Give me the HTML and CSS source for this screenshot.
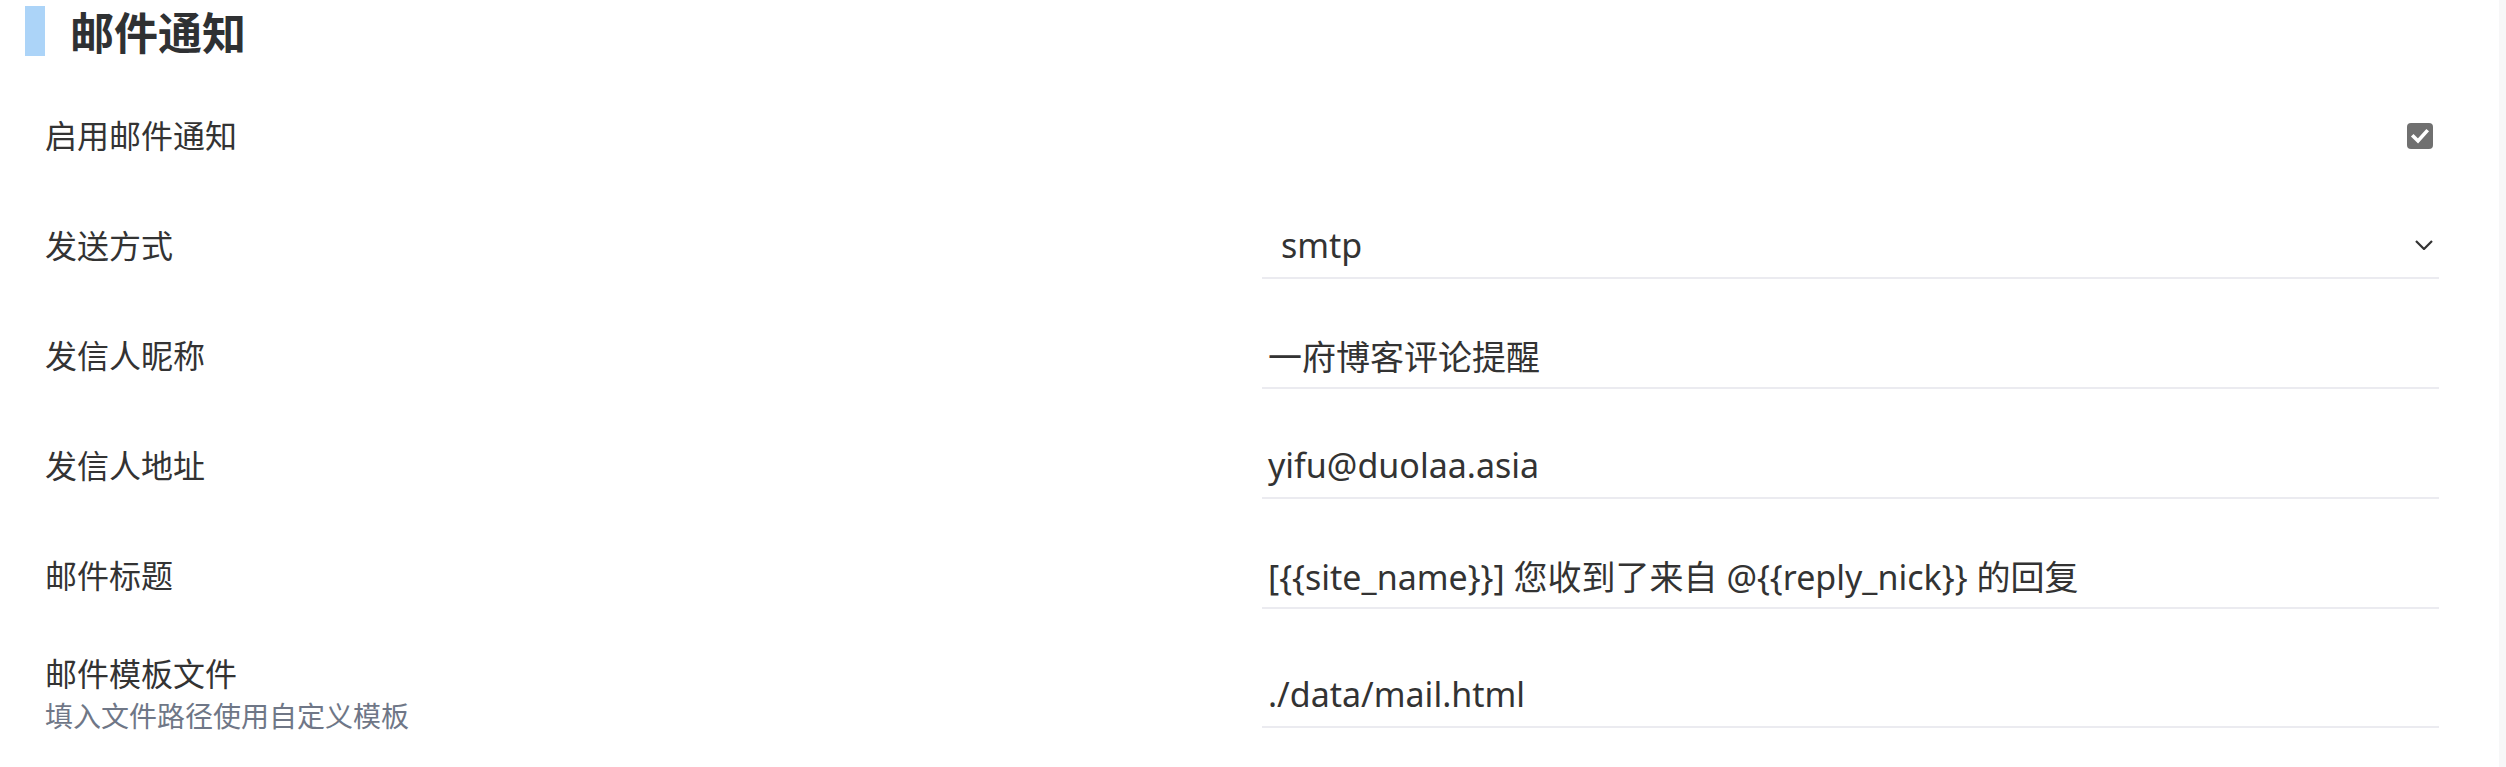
FILE: index.html
```html
<!DOCTYPE html>
<html lang="zh-CN">
<head>
<meta charset="utf-8">
<title>邮件通知</title>
<link rel="stylesheet" href="styles.css">
</head>
<body>
<div class="page">
  <main class="main">
    <h2 class="title"><span class="title-bar"></span><span class="title-text">邮件通知</span></h2>
    <div class="list">
      <div class="row">
        <div class="label"><div class="label-main">启用邮件通知</div></div>
        <div class="control control-end">
          <span class="checkbox" role="checkbox" aria-checked="true">
            <svg viewBox="0 0 26 26" width="26" height="26"><path d="M6.5 13.5 L11 18 L19.5 8.5" fill="none" stroke="#fff" stroke-width="3.6" stroke-linecap="square" stroke-linejoin="miter"/></svg>
          </span>
        </div>
      </div>
      <div class="row">
        <div class="label"><div class="label-main">发送方式</div></div>
        <div class="control">
          <div class="field field-select"><span class="field-value">smtp</span>
            <svg class="chevron" viewBox="0 0 18 10" width="18" height="10"><path d="M1 1 L9 9 L17 1" fill="none" stroke="#333" stroke-width="2.2"/></svg>
          </div>
        </div>
      </div>
      <div class="row">
        <div class="label"><div class="label-main">发信人昵称</div></div>
        <div class="control"><div class="field"><span class="field-value">一府博客评论提醒</span></div></div>
      </div>
      <div class="row">
        <div class="label"><div class="label-main">发信人地址</div></div>
        <div class="control"><div class="field"><span class="field-value">yifu@duolaa.asia</span></div></div>
      </div>
      <div class="row">
        <div class="label"><div class="label-main">邮件标题</div></div>
        <div class="control"><div class="field"><span class="field-value">[{{site_name}}] 您收到了来自 @{{reply_nick}} 的回复</span></div></div>
      </div>
      <div class="row">
        <div class="label"><div class="label-main">邮件模板文件</div><div class="label-hint">填入文件路径使用自定义模板</div></div>
        <div class="control"><div class="field"><span class="field-value">./data/mail.html</span></div></div>
      </div>
    </div>
  </main>
  <div class="scrolltrack"></div>
</div>
</body>
</html>
```
FILE: styles.css
```css
html, body {
  margin: 0;
  padding: 0;
  background: #ffffff;
}
body {
  font-family: "Noto Sans", "Noto Sans CJK SC", sans-serif;
  color: #333333;
}
.page {
  display: flex;
  min-height: 100vh;
}
.main {
  flex: 1;
  padding: 6px 40px 0 25px;
}
.scrolltrack {
  width: 7px;
  background: #f7f7f8;
}
.title {
  display: flex;
  align-items: center;
  gap: 25px;
  height: 50px;
  margin: 0;
}
.title-bar {
  width: 20px;
  height: 50px;
  background: #acd4f8;
}
.title-text {
  font-family: "Noto Sans CJK SC", sans-serif;
  font-size: 44px;
  font-weight: 700;
  line-height: 50px;
  color: #2f3133;
}
.list {
  margin-top: 25px;
}
.row {
  display: grid;
  grid-template-columns: 1fr 1177px;
  align-items: center;
  min-height: 110px;
  box-sizing: border-box;
  padding: 22px 20px;
}
.label-main {
  font-size: 32px;
  line-height: 42px;
  color: #333333;
}
.label-hint {
  font-size: 28px;
  line-height: 42px;
  color: #6f7787;
}
.control-end {
  display: flex;
  justify-content: flex-end;
}
.checkbox {
  width: 26px;
  height: 26px;
  margin-right: 6px;
  border-radius: 4px;
  background: #707070;
  display: flex;
}
.field {
  height: 66px;
  box-sizing: border-box;
  border-bottom: 2px solid #ebebf0;
  display: flex;
  align-items: center;
  padding: 0 6px;
  font-size: 34px;
  color: #333333;
  white-space: nowrap;
}
.field-select {
  padding-left: 19px;
  justify-content: space-between;
}
```
